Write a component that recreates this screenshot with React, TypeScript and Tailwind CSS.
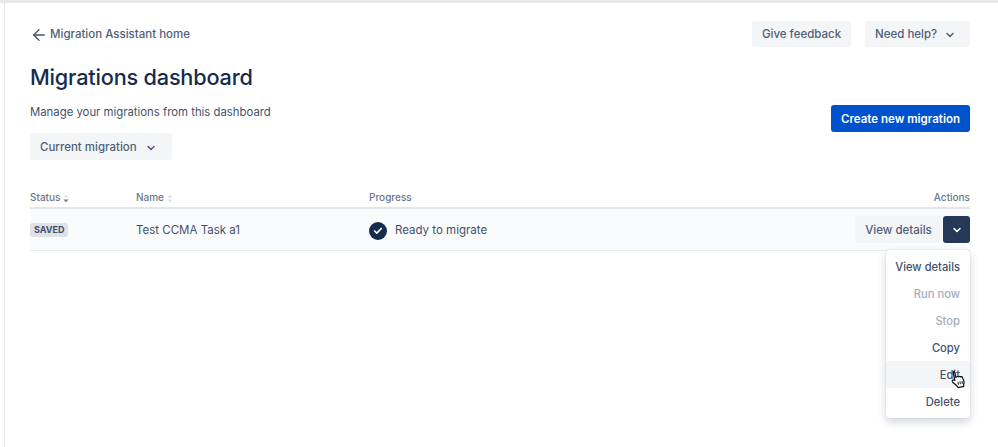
import { ArrowLeft, Check, ChevronDown } from "lucide-react";

const MENU_ITEMS = [
  { label: "View details", className: "text-[#42526e]" },
  { label: "Run now", className: "text-[#a5adba]" },
  { label: "Stop", className: "text-[#a5adba]" },
  { label: "Copy", className: "text-[#42526e]" },
  { label: "Edit", className: "bg-[#f4f5f7] text-[#42526e]" },
  { label: "Delete", className: "text-[#42526e]" },
];

function SortArrows({ active }: { active?: boolean }) {
  return (
    <svg width="6" height="9" viewBox="0 0 6 9" className="ml-[3px] mt-[2px]">
      <path d="M0.5 3.4 3 0.8 5.5 3.4Z" fill="#dfe1e6" />
      <path d="M0.5 5.6 3 8.2 5.5 5.6Z" fill={active ? "#6b778c" : "#dfe1e6"} />
    </svg>
  );
}

function HandCursor() {
  return (
    <svg width="16" height="20" viewBox="0 0 14 18" className="absolute left-[64px] top-[119px] -rotate-12">
      <path
        d="M4.2 1.6c.7 0 1.2.5 1.2 1.2v4.3l.6-.1c.6-.5 1.4-.4 1.8.2.6-.4 1.4-.2 1.7.4.7-.3 1.5.1 1.7.8l.6 3.6c.1 1-.2 1.9-.8 2.7l-.5 1.9H5.6l-.9-1.8-3-3.9c-.4-.6-.3-1.3.2-1.7.5-.4 1.2-.3 1.7.1l.4.4V2.8c0-.7.5-1.2 1.2-1.2Z"
        fill="#fff"
        stroke="#111"
        strokeWidth="1.1"
        strokeLinejoin="round"
      />
      <path d="M6.4 11.5v2.6M8.2 11.5v2.6M10 11.5v2.6" stroke="#111" strokeWidth="0.8" />
    </svg>
  );
}

export default function App() {
  return (
    <div className="relative h-[447px] w-[998px] overflow-hidden bg-white font-['Inter',sans-serif] text-[#42526e]">
      <div className="h-[3px] bg-[#e9e9e9]" />
      <div className="ml-[4px] h-[444px] border-l border-[#e4e4e4] pl-[25px] pr-[28px] pt-[18px]">
        <div className="flex items-center justify-between">
          <div className="flex items-center pt-[2px] text-[11.5px] font-medium text-[#505f79]">
            <ArrowLeft size={18} strokeWidth={1.75} className="mr-[2px] text-[#42526e]" />
            Migration Assistant home
          </div>
          <div className="flex gap-[14px] text-[11.5px] font-medium">
            <button className="h-[26px] w-[99px] rounded-[3px] bg-[#f4f5f7] pt-[1px] text-[#505f79]">Give feedback</button>
            <button className="flex h-[26px] w-[105px] items-center rounded-[3px] bg-[#f4f5f7] pl-[10px] pt-[1px] text-[#505f79]">
              Need help?
              <ChevronDown size={12} strokeWidth={3} className="ml-[7px]" />
            </button>
          </div>
        </div>

        <h1 className="mt-[14px] text-[21.7px] font-medium leading-[32px] tracking-[-0.2px] text-[#172b4d]">
          Migrations dashboard
        </h1>

        <div className="mt-[9px] flex items-start justify-between">
          <div>
            <p className="text-[11.35px] leading-[20px] text-[#42526e]">
              Manage your migrations from this dashboard
            </p>
            <button className="mt-[11px] flex h-[27px] w-[142px] items-center rounded-[3px] bg-[#f4f5f7] pl-[10px] pt-[2px] text-[11.5px] font-medium text-[#505f79]">
              Current migration
              <ChevronDown size={12} strokeWidth={3} className="ml-[8px]" />
            </button>
          </div>
          <button className="mt-[3px] h-[27px] w-[139px] rounded-[3px] bg-[#0052cc] pt-[2px] text-[11.5px] font-semibold text-white">
            Create new migration
          </button>
        </div>

        <div className="mt-[30px] flex h-[19px] items-center border-b-2 border-[#e3e5e9] pb-[3px] text-[10px] font-medium text-[#6b778c]">
          <div className="flex w-[106px] items-center">
            Status
            <SortArrows active />
          </div>
          <div className="flex w-[232px] items-center">
            Name
            <SortArrows />
          </div>
          <div className="pl-[1px]">Progress</div>
          <div className="ml-auto">Actions</div>
        </div>

        <div className="relative flex h-[42px] items-center border-b border-[#e9ebee] bg-[#fafbfc] text-[11.5px] text-[#42526e]">
          <div className="w-[106px]">
            <span className="inline-block h-[14px] rounded-[3px] bg-[#dfe1e6] px-[4px] text-[9px] font-bold leading-[14px] text-[#42526e]">
              SAVED
            </span>
          </div>
          <div className="w-[232px] pt-[2px]">Test CCMA Task a1</div>
          <div className="flex items-center pt-[2px]">
            <span className="mr-[8px] ml-[1px] flex h-[18px] w-[18px] items-center justify-center rounded-full bg-[#172b4d]">
              <Check size={10} strokeWidth={4} className="text-white" />
            </span>
            Ready to migrate
          </div>
          <div className="ml-auto flex gap-[1px] font-medium">
            <button className="h-[27px] w-[87px] rounded-[3px] bg-[#f4f5f7] pt-[2px] text-[#505f79]">View details</button>
            <button className="flex h-[27px] w-[27px] items-center justify-center rounded-[3px] bg-[#253858]">
              <ChevronDown size={12} strokeWidth={3} className="text-white" />
            </button>
          </div>

          <div className="absolute right-0 top-[41px] w-[84px] rounded-[3px] bg-white py-[3px] text-right text-[11.2px] font-medium shadow-[0_4px_10px_rgba(9,30,66,0.18),0_0_1px_rgba(9,30,66,0.25)]">
            {MENU_ITEMS.map((item) => (
              <div key={item.label} className={`h-[27px] pr-[10px] pt-[1px] leading-[27px] ${item.className}`}>
                {item.label}
              </div>
            ))}
            <HandCursor />
          </div>
        </div>
      </div>
    </div>
  );
}
